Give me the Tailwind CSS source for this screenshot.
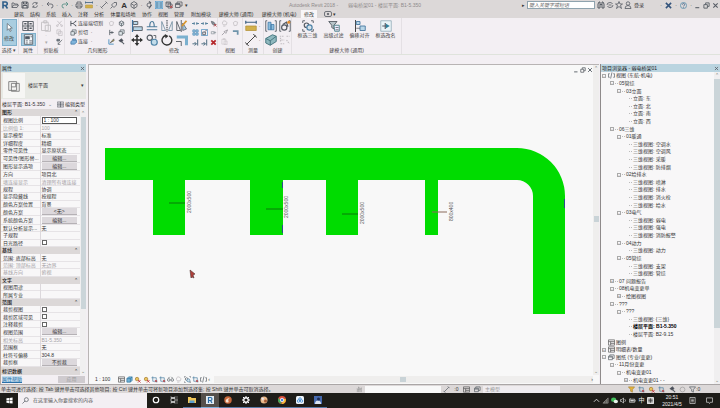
<!DOCTYPE html>
<html lang="zh-CN">
<head>
  <meta charset="UTF-8" />
  <meta name="viewport" content="width=device-width, initial-scale=1.0" />
  <title>Autodesk Revit 2018</title>
  <script src="https://cdn.jsdelivr.net/npm/@tailwindcss/browser@4"></script>
</head>
<body class="h-screen flex flex-col overflow-hidden bg-[#f3eff3] fill-none stroke-[#555b63] [stroke-width:1.6] text-[#333] font-['Liberation_Sans','Noto_Sans_CJK_SC',sans-serif] text-[5px] leading-[7px] whitespace-nowrap">

  <!-- icon set, all on a 16 grid; fill and stroke come from the body -->
  <svg class="hidden">
    <symbol id="revit" viewBox="0 0 16 16"><path d="M4 15V2h5a3.500 3.500 0 0 1 0 7H5M9 9l4 6" stroke="#2f5f8a" stroke-width="3.200"/></symbol>
    <symbol id="open" viewBox="0 0 16 16"><path d="M2 13V4h4l1 2h6v2M2 13l3-5h10l-3 5z"/></symbol>
    <symbol id="save" viewBox="0 0 16 16"><path d="M2 2h11l1 2v10H2zM5 2v4h6V2M4 14V9h8v5" stroke-width="2"/></symbol>
    <symbol id="sync" viewBox="0 0 16 16"><path d="M3 7a5 5 0 0 1 9-2M13 9a5 5 0 0 1-9 2M12 2v4H9M4 14v-4h3"/></symbol>
    <symbol id="undo" viewBox="0 0 16 16"><path d="M6 2L2 6l4 4M2 6h8q4 0 4 4t-4 4"/></symbol>
    <symbol id="redo" viewBox="0 0 16 16"><path d="M10 2l4 4-4 4M14 6H6q-4 0-4 4t4 4" stroke="#4d8a80"/></symbol>
    <symbol id="print" viewBox="0 0 16 16"><path d="M4 6V2h8v4M4 12H2V6h12v6h-2M4 10h8v4H4z"/></symbol>
    <symbol id="measure" viewBox="0 0 16 16"><path d="M1 3h14M1 1v4M15 1v4" stroke="#3c5f80"/><path d="M1 8h14v6H1z" fill="#d2b04c" stroke="#b3923a" stroke-width="1"/></symbol>
    <symbol id="line" viewBox="0 0 16 16"><path d="M3 13L13 3M1 11l4 4M11 1l4 4"/></symbol>
    <symbol id="tag" viewBox="0 0 16 16"><path d="M3 8l5-5h5v5l-5 5zM1 15l4-4"/></symbol>
    <symbol id="cube" viewBox="0 0 16 16"><path d="M8 1l6 4v6l-6 4-6-4V5zM2 5l6 4 6-4M8 9v6"/></symbol>
    <symbol id="section" viewBox="0 0 16 16"><circle cx="8" cy="8" r="4"/><path d="M8 1l4 3M8 15l5-7" stroke-width="2.400"/></symbol>
    <symbol id="thin" viewBox="0 0 16 16"><path d="M0 0h16v16H0z" fill="#a9d2ea" stroke="#4189bd"/><path d="M2 4h5M2 8h5M2 12h5M9 4h5M9 8h5M9 12h5" stroke="#27557c"/></symbol>
    <symbol id="closewin" viewBox="0 0 16 16"><path d="M2 2h9v9H2zM2 4h9M6 6h8v8H6z"/><path d="M10 9l5 5M15 9l-5 5" stroke="#c2383a"/></symbol>
    <symbol id="switch" viewBox="0 0 16 16"><path d="M1 5h9v8H1zM4 5V2h10v8h-4M1 7h9"/></symbol>
    <symbol id="binoc" viewBox="0 0 16 16"><path d="M2 14V6l2-4h2v12zM10 14V2h2l2 4v8zM6 7h4" stroke-width="2"/></symbol>
    <symbol id="comm" viewBox="0 0 16 16"><path d="M2 8q0-5 6-5 4 0 5 3M14 8q0 5-6 5-4 0-5-3M5 8h6"/></symbol>
    <symbol id="hand" viewBox="0 0 16 16"><path d="M3 14V6l3 3V2l3 7 3-5v10M6 9v5M9 9v5" stroke="#999"/></symbol>
    <symbol id="star" viewBox="0 0 16 16"><path d="M8 1l2 5h5l-4 3 2 6-5-4-5 4 2-6-4-3h5z"/></symbol>
    <symbol id="user" viewBox="0 0 16 16"><circle cx="8" cy="5" r="3.500"/><path d="M2 15q0-6 6-6t6 6z"/></symbol>
    <symbol id="exchange" viewBox="0 0 16 16"><path d="M2 2l12 12M14 2L2 14" stroke="#34547c" stroke-width="3.500"/></symbol>
    <symbol id="help" viewBox="0 0 16 16"><circle cx="8" cy="8" r="7" stroke="#4b87a8"/><path d="M5.500 6q0-2.500 2.500-2.500T10.500 6 8 9M8 11v2" stroke="#34547c"/></symbol>
    <symbol id="min" viewBox="0 0 16 16"><path d="M3 13h9" stroke-width="2.400"/></symbol>
    <symbol id="restore" viewBox="0 0 16 16"><path d="M2 6h8v8H2zM6 6V2h8v8h-4" stroke-width="2"/></symbol>
    <symbol id="x" viewBox="0 0 16 16"><path d="M3 3l10 10M13 3L3 13" stroke-width="2.400"/></symbol>
    <symbol id="arrow" viewBox="0 0 16 16"><path d="M4 1v12l3-3 2 5 2-1-2-5h4z" fill="#fff" stroke-width="1.200"/></symbol>
    <symbol id="typeprops" viewBox="0 0 16 16"><path d="M1 2h7v12H1zM8 2h7v12H8zM1 8h14" stroke-width="1.200"/><path d="M3 5h3M10 5h3M3 11h3M10 11h3" stroke-width="2"/></symbol>
    <symbol id="props" viewBox="0 0 16 16"><path d="M2 1h12v14H2z" fill="#f4f8fb" stroke-width="1.200"/><path d="M4 4h5v3H4z" fill="#456" /><path d="M11 4h2M4 10h3M9 10h4M4 13h3M9 13h4" stroke-width="1.200"/></symbol>
    <symbol id="paste" viewBox="0 0 16 16"><path d="M2 3h9v11H2zM5 1h4v3H5zM7 7h7v8H7z" stroke="#c3bfc3" stroke-width="1.200"/></symbol>
    <symbol id="cut" viewBox="0 0 16 16"><path d="M3 2l9 10M13 2L4 12" stroke="#bdb9bd"/><circle cx="3" cy="13" r="2" stroke="#bdb9bd"/><circle cx="13" cy="13" r="2" stroke="#bdb9bd"/></symbol>
    <symbol id="copyg" viewBox="0 0 16 16"><path d="M2 2h8v9H2zM6 6h8v9H6z" stroke="#c3bfc3"/></symbol>
    <symbol id="match" viewBox="0 0 16 16"><path d="M2 3h6v4H2z" fill="#7a8590"/><path d="M5 14l9-10M5 10v5h5"/></symbol>
    <symbol id="cope" viewBox="0 0 16 16"><path d="M2 2v12M2 8h5M7 8l7-6M7 8l7 6M13 2v3M13 14v-3" stroke-width="2.200"/></symbol>
    <symbol id="cutgeo" viewBox="0 0 16 16"><path d="M2 6h8v8H2zM5 6V2h9v8h-4" fill="#e2e8ec"/></symbol>
    <symbol id="join" viewBox="0 0 16 16"><path d="M2 8l4-3h9v5l-5 4H2zM6 5V2h7v3" fill="#7fb4da" stroke="#3d76a6"/></symbol>
    <symbol id="solid" viewBox="0 0 16 16"><path d="M3 5l5-3 5 3v6l-5 3-5-3zM8 8v6M3 5l5 3 5-3" fill="#d5dde2"/></symbol>
    <symbol id="solidg" viewBox="0 0 16 16"><path d="M3 6l4-3 6 2-2 7-6 1z" stroke="#bdb9bd"/></symbol>
    <symbol id="split" viewBox="0 0 16 16"><path d="M4 2v12M4 8h9M9 5v6" stroke-width="2"/></symbol>
    <symbol id="paint" viewBox="0 0 16 16"><path d="M2 3v11h11" stroke="#4189bd" stroke-width="2"/><path d="M5 11l8-9 1 4z" fill="#d2b04c"/></symbol>
    <symbol id="hammer" viewBox="0 0 16 16"><path d="M3 6l5-4 3 4-4 3zM8 8l6 6" fill="#445" stroke-width="2.400"/></symbol>
    <symbol id="align" viewBox="0 0 16 16"><path d="M2 0v16" stroke="#3d76a6"/><path d="M3 2h6v4H3zM3 9h12v5H3z" fill="#b8d6e8" stroke-width="1.200"/></symbol>
    <symbol id="offset" viewBox="0 0 16 16"><path d="M1 13h14M1 9h4q0-7 3-7t3 7h4M5 9h6" stroke="#4f7c9c"/></symbol>
    <symbol id="mirror" viewBox="0 0 16 16"><path d="M8 0v16" stroke-dasharray="2 1"/><path d="M1 14V2l5 12zM15 14V2l-5 12z" stroke="#7b95a8" stroke-width="1.200"/></symbol>
    <symbol id="mirrorp" viewBox="0 0 16 16"><path d="M7 0v16M1 14V2l5 12z" stroke-width="1.200"/><path d="M9 14V4l5 8z" fill="#a5c9e0" stroke-width="1"/><path d="M8 8l6-7" stroke="#d9962c" stroke-width="2.400"/></symbol>
    <symbol id="move" viewBox="0 0 16 16"><path d="M8 2v12M2 8h12" stroke="#333" stroke-width="2"/><path d="M8 0l3 4H5zM8 16l3-4H5zM0 8l4-3v6zM16 8l-4-3v6z" fill="#333" stroke="none"/></symbol>
    <symbol id="copy" viewBox="0 0 16 16"><circle cx="5" cy="5" r="3.500"/><circle cx="11" cy="11" r="4" fill="#c3dcea" stroke="#4f84a8"/><path d="M10 2h3v4" stroke-width="1.200"/></symbol>
    <symbol id="rotate" viewBox="0 0 16 16"><path d="M6 2a6.500 6.500 0 1 0 5 .5" stroke="#333" stroke-width="1.800"/><path d="M5 0l5 2.500L6 6z" fill="#333" stroke="none"/></symbol>
    <symbol id="trim" viewBox="0 0 16 16"><path d="M1 4h13v11" stroke="#7bb0cf" stroke-width="4"/><path d="M0 10h7v6" stroke-width="1.200"/></symbol>
    <symbol id="gap" viewBox="0 0 16 16"><path d="M0 8h6M10 8h6M5 5v6M11 5v6" stroke="#56809c" stroke-width="2.200"/></symbol>
    <symbol id="unpin" viewBox="0 0 16 16"><path d="M3 3l6 2 4 6-4 1-4-3z" fill="#8d979e"/><path d="M9 9l6 6M15 9l-6 6" stroke="#c2383a"/></symbol>
    <symbol id="array" viewBox="0 0 16 16"><path d="M2 2h5v5H2zM9 2h5v5H9zM2 9h5v5H2zM9 9h5v5H9z" fill="#b8d6e8" stroke="#3d84b4"/></symbol>
    <symbol id="scale" viewBox="0 0 16 16"><path d="M1 1h14v14H1z" stroke="#4189bd"/><path d="M4 7h6v6H4zM9 6l4-4" stroke-width="2"/></symbol>
    <symbol id="pin" viewBox="0 0 16 16"><path d="M3 6h6v5H3zM9 8h5M11 5v7" stroke="#8d979e"/></symbol>
    <symbol id="extend" viewBox="0 0 16 16"><path d="M13 1v14M1 11h9M6 7l4 4-4 4" stroke="#4a6a80" stroke-width="2.200"/></symbol>
    <symbol id="del" viewBox="0 0 16 16"><path d="M3 3l10 10M13 3L3 13" stroke="#b5262a" stroke-width="4"/></symbol>
    <symbol id="bulb" viewBox="0 0 16 16"><path d="M5 14h5M5 11q-3-3-1-7t7-1 1 8z" stroke="#bdb9bd"/></symbol>
    <symbol id="brush" viewBox="0 0 16 16"><path d="M2 14l6-6M7 6l4 4 4-8z" stroke="#8c8a90"/></symbol>
    <symbol id="beam" viewBox="0 0 16 16"><path d="M2 5h11v8" stroke="#6f94ab" stroke-width="4"/></symbol>
    <symbol id="dim" viewBox="0 0 16 16"><path d="M2 14L14 2M0 11l5 5M11 0l5 5" stroke="#333" stroke-width="1.200"/></symbol>
    <symbol id="group" viewBox="0 0 16 16"><path d="M3 1H1v14h2M13 1h2v14h-2" stroke-width="1.200"/><path d="M4 3h4v10H4zM8 6h4v7H8z" fill="#8bbddc" stroke="#3d76a6" stroke-width="1"/></symbol>
    <symbol id="similar" viewBox="0 0 16 16"><path d="M3 1H1v14h2M13 1h2v14h-2" stroke-width="1.200"/><circle cx="7" cy="10" r="3.500"/><path d="M5 6l5-3 2 6"/><circle cx="13" cy="3" r="2" fill="#e08a2c" stroke="none"/></symbol>
    <symbol id="assembly" viewBox="0 0 16 16"><path d="M1 6l9-5 5 2v7l-8 5-6-3z" fill="#8fb9bf" stroke="#41727a" stroke-width="1.200"/><path d="M1 6l6 3 8-6M7 9v6" stroke="#41727a" stroke-width="1.200"/></symbol>
    <symbol id="parts" viewBox="0 0 16 16"><path d="M1 3h5M10 3h4M3 8h4M10 8l4 5M2 13h5M2 5v5" stroke="#c3bfc3" stroke-dasharray="2 1"/></symbol>
    <symbol id="box3d" viewBox="0 0 16 16"><path d="M1 4V1h3M12 1h3v3M15 12v3h-3M4 15H1v-3" stroke-width="1.200"/><circle cx="6" cy="7" r="3" /><circle cx="10" cy="10" r="3.500" fill="#d4e2ea" stroke="#4f84a8"/></symbol>
    <symbol id="funnel" viewBox="0 0 16 16"><path d="M1 2h11L8 7v5L5 10V7z" fill="#b7c4c8" stroke-width="1.200"/><path d="M8 7h7v8H9z" fill="#eef" stroke="#4b8088" stroke-width="1.200"/><path d="M10 10h4M10 13h4" stroke-width="1"/></symbol>
    <symbol id="offalign" viewBox="0 0 16 16"><path d="M2 0v16" stroke="#333" stroke-width="1.200"/><path d="M3 2h5v4H3zM8 8h7v6H8z" fill="#b8d6e8" stroke="#4878a0" stroke-width="1.200"/><path d="M3 11h5" stroke-width="1"/></symbol>
    <symbol id="rename" viewBox="0 0 16 16"><path d="M1 1h14v14H1z" fill="#eaf4f8" stroke="#8ba5b2" stroke-width="1"/><path d="M7 4v8M3 8h5" stroke-width="1.500"/><path d="M8 5l5 3-5 3z" fill="#2f7f9c" stroke="none"/></symbol>
    <symbol id="ribtoggle" viewBox="0 0 16 16"><rect x="1" y="3" width="14" height="10" rx="3"/><circle cx="8" cy="8" r="1.500" fill="#555"/></symbol>
    <symbol id="views" viewBox="0 0 16 16"><path d="M4 4H1v8h3M12 4h3v8h-3M9 1L6 15"/></symbol>
    <symbol id="sheet" viewBox="0 0 16 16"><path d="M1 2h14v12H1zM1 6h14M6 6v8M6 10h9" stroke="#555"/></symbol>
    <symbol id="vbox" viewBox="0 0 16 16"><path d="M2 6h8v8H2zM2 6l4-4h8v8l-4 4M10 6l4-4" fill="#72b3d6" stroke="#3477a0"/></symbol>
    <symbol id="sun" viewBox="0 0 16 16"><circle cx="7" cy="7" r="4" fill="#eac45e" stroke="#a57b30"/><path d="M9 9l6 6M15 9l-6 6" stroke="#c2383a" stroke-width="2"/></symbol>
    <symbol id="crop" viewBox="0 0 16 16"><path d="M4 1v11h11M1 4h11v11" stroke="#4a7ea0"/><path d="M9 9l5 5M14 9l-5 5" stroke="#c2383a"/></symbol>
    <symbol id="glasses" viewBox="0 0 16 16"><circle cx="4" cy="9" r="3"/><circle cx="12" cy="9" r="3"/><path d="M3 5l3-3M13 5l-3-3"/></symbol>
    <symbol id="filter" viewBox="0 0 16 16"><path d="M1 2h14l-5 6v6l-4-2V8z"/></symbol>
    <symbol id="filtery" viewBox="0 0 16 16"><path d="M1 2h14l-5 6v6l-4-2V8z" fill="#e8b53a" stroke="#a8873c"/></symbol>
    <symbol id="gear" viewBox="0 0 16 16"><circle cx="8" cy="8" r="4.500" stroke="#fff" stroke-width="2.600"/><path d="M8 0v3M8 13v3M0 8h3M13 8h3M2 2l2 2M12 12l2 2M14 2l-2 2M4 12l-2 2" stroke="#fff" stroke-width="2"/></symbol>
    <symbol id="ring" viewBox="0 0 16 16"><circle cx="8" cy="8" r="5.500" stroke="#999" stroke-width="1.500"/></symbol>
    <symbol id="win" viewBox="0 0 16 16"><path d="M1 3l6-1v5.500H1zM8 2l7-1v6.500H8zM1 8.500h6V14l-6-1zM8 8.500h7V15l-7-1z" fill="#fff" stroke="none"/></symbol>
    <symbol id="search" viewBox="0 0 16 16"><circle cx="10" cy="6" r="4.500"/><path d="M7 9l-6 6"/></symbol>
    <symbol id="cortana" viewBox="0 0 16 16"><circle cx="8" cy="8" r="5.500" stroke="#fff" stroke-width="2.400"/></symbol>
    <symbol id="taskview" viewBox="0 0 16 16"><path d="M2 1v2h8V1M2 15v-2h8v2M2 5h8v6H2zM14 1v2M14 5v6M14 13v2" stroke="#ddd"/></symbol>
    <symbol id="folder" viewBox="0 0 16 16"><path d="M0 2h6l1 2h9v10H0z" fill="#f0c659" stroke="none"/><path d="M3 9h10v5H3z" fill="#5b9fd0" stroke="none"/></symbol>
    <symbol id="revitapp" viewBox="0 0 16 16"><path d="M0 0h16v16H0z" fill="#e4edf4" stroke="none"/><path d="M5 14V3h4a3 3 0 0 1 0 6H5M9 9l3 5" stroke="#2b6ca5" stroke-width="2.400"/></symbol>
    <symbol id="swirl" viewBox="0 0 16 16"><circle cx="8" cy="8" r="7.500" fill="#c8693c" stroke="none"/><path d="M3 10q2-7 9-5-5 1-3 5t-4 3z" fill="#f4e4d4" stroke="none"/></symbol>
    <symbol id="palette" viewBox="0 0 16 16"><circle cx="8" cy="8" r="7" fill="#e9b98a" stroke="none"/><path d="M2 3l6 1-2 6z" fill="#e7e7f2" stroke="none"/><circle cx="11" cy="10" r="3" fill="#a45b39" stroke="none"/></symbol>
    <symbol id="chrome" viewBox="0 0 16 16"><circle cx="8" cy="8" r="8" fill="#d94f3c" stroke="none"/><path d="M1 4l5 7 1 5A8 8 0 0 1 1 4z" fill="#3fa757" stroke="none"/><path d="M15.500 6A8 8 0 0 1 7 16l4-6V6z" fill="#f1c232" stroke="none"/><circle cx="8" cy="8" r="3.500" fill="#4a86e0" stroke="#fff"/></symbol>
    <symbol id="cloud" viewBox="0 0 16 16"><rect width="16" height="16" rx="3" fill="#eef4fa" stroke="none"/><circle cx="8" cy="6" r="2.500" stroke="#3a86d0"/><circle cx="5" cy="10" r="2.500" stroke="#3a86d0"/><circle cx="11" cy="10" r="2.500" stroke="#3a86d0"/></symbol>
    <symbol id="photo" viewBox="0 0 16 16"><path d="M0 0h16v16H0z" fill="#4669ad" stroke="none"/><path d="M2 16q0-7 6-7t6 7z" fill="#dbe5f2" stroke="none"/><circle cx="9" cy="6" r="3" fill="#1e2c50" stroke="none"/></symbol>
    <symbol id="up" viewBox="0 0 16 16"><path d="M2 11l6-6 6 6" stroke="#ddd" stroke-width="2"/></symbol>
    <symbol id="wifi" viewBox="0 0 16 16"><path d="M2 14L14 2v12zM6 14v-4M10 14V6" stroke="#8b8b88" fill="#55554f"/></symbol>
    <symbol id="wechat" viewBox="0 0 16 16"><ellipse cx="6" cy="6" rx="6" ry="5" fill="#43c05c" stroke="none"/><ellipse cx="11" cy="10" rx="5" ry="4" fill="#e8f3ea" stroke="none"/></symbol>
    <symbol id="sound" viewBox="0 0 16 16"><path d="M1 6h3l4-4v12l-4-4H1zM11 5q3 3 0 6" stroke="#ddd"/></symbol>
    <symbol id="battery" viewBox="0 0 16 16"><path d="M1 5h12v7H1zM14 7v3M3 3v2" stroke="#ddd"/><path d="M3 7h8v3H3z" fill="#ddd" stroke="none"/></symbol>
    <symbol id="sogou" viewBox="0 0 16 16"><rect width="16" height="16" rx="2" fill="#ddd" stroke="none"/><path d="M3 5h10M3 8h10M3 11h10M8 3v10" stroke="#333"/></symbol>
    <symbol id="news" viewBox="0 0 16 16"><path d="M2 1h12v14H2zM5 5h6M5 8h6M5 11h6" stroke="#ddd"/></symbol>
    <symbol id="note" viewBox="0 0 16 16"><path d="M1 2h14v10h-5l-2 3-2-3H1z" stroke="#ddd"/></symbol>
  </svg>

  <header class="bg-[#dcd8d8]">
    <!-- quick access, title, search -->
    <div class="flex h-[10px] items-center">
      <div class="flex w-[188px] items-center justify-between pl-[1px]" data-icons="revit open save sync . undo . redo . print measure . line tag A cube . section thin closewin switch ▾" data-size="size-[8px]"></div>
      <h1 class="flex-1 text-center text-[#8f8b8b]">Autodesk Revit 2018 - &nbsp; &nbsp; &nbsp; 弱电桥架01 - 楼层平面: B1-5.350</h1>
      <div class="flex items-center gap-[2px] pr-[1px]">
        <span>▸</span>
        <input type="text" aria-label="搜索" placeholder="键入关键字或短语" class="h-[8px] w-[68px] border border-[#8fa3ae] bg-white px-[1px] italic placeholder:text-[#666]" />
        <div class="flex gap-[1px]" data-icons="binoc comm star user" data-size="size-[8px]"></div>
        <a href="#" class="w-[24px]">登录</a>
        <div class="flex w-[32px] items-center gap-[3px]" data-icons=". exchange . help ." data-size="size-[7px]"></div>
        <div class="flex gap-[2px]" data-icons="min restore x" data-size="size-[7px]"></div>
      </div>
    </div>
    <nav class="flex h-[8px] items-center pl-[11px] text-center leading-[8px]">
      <a href="#" class="w-[16px]">建筑</a>
      <a href="#" class="w-[16px]">结构</a>
      <a href="#" class="w-[16px]">系统</a>
      <a href="#" class="w-[16px]">插入</a>
      <a href="#" class="w-[16px]">注释</a>
      <a href="#" class="w-[16px]">分析</a>
      <a href="#" class="w-[32px]">体量和场地</a>
      <a href="#" class="w-[16px]">协作</a>
      <a href="#" class="w-[16px]">视图</a>
      <a href="#" class="w-[16px]">管理</a>
      <a href="#" class="w-[28px]">附加模块</a>
      <a href="#" class="w-[42px]">建模大师 (通用)</a>
      <a href="#" class="w-[44px]">建模大师 (机电)</a>
      <a href="#" class="w-[16px] bg-[#f8f6f8]">修改</a>
      <div class="ml-[7px] flex items-center gap-[1px]" data-icons="ribtoggle ▾" data-size="size-[8px]"></div>
    </nav>
  </header>

  <!-- ribbon -->
  <section class="flex h-[37px] border-b border-[#dfe3dc] text-[#444]">
    <div class="flex w-[19px] flex-col items-center border-r border-[#e4e0e4]">
      <button class="mt-[1px] flex h-[27px] w-[15px] flex-col items-center justify-center gap-[3px] border border-[#7fb0cc] bg-[#a9cde0]">
        <svg class="size-[9px]"><use href="#arrow"/></svg>修改
      </button>
      <p class="mt-auto">选择 ▾</p>
    </div>
    <div class="flex w-[18px] flex-col items-center">
      <button class="mt-[1px] flex h-[14px] items-center" aria-label="类型属性"><svg class="size-[12px]"><use href="#typeprops"/></svg></button>
      <button class="flex h-[13px] w-[15px] items-center justify-center border border-[#7fb0cc] bg-[#a9cde0]" aria-label="属性"><svg class="size-[11px]"><use href="#props"/></svg></button>
      <p class="mt-auto">属性</p>
    </div>
    <div class="flex w-[28px] flex-col items-center border-x border-[#e4e0e4]">
      <div class="flex gap-[3px] pt-[2px]">
        <div class="flex w-[13px] flex-col items-center text-[#aaa]" data-icons="paste .  ▾" data-size="size-[12px]"></div>
        <div class="flex flex-col gap-[2px]" data-icons="cut copyg match" data-size="size-[7px]"></div>
      </div>
      <p class="mt-auto">剪贴板</p>
    </div>
    <div class="flex w-[66px] flex-col items-center border-r border-[#e4e0e4]">
      <div class="flex gap-[3px] pt-[2px]">
        <div class="flex w-[35px] flex-col gap-[2px]">
          <button class="flex items-center gap-[1px]"><svg class="size-[7px]"><use href="#cope"/></svg>连接端切割</button>
          <button class="flex items-center gap-[1px]"><svg class="size-[7px]"><use href="#cutgeo"/></svg>剪切 &nbsp;·</button>
          <button class="flex items-center gap-[1px]"><svg class="size-[7px]"><use href="#join"/></svg>连接 &nbsp;·</button>
        </div>
        <div class="flex flex-col gap-[2px]" data-icons="solidg split paint" data-size="size-[7px]"></div>
        <div class="flex flex-col gap-[2px]" data-icons="solid cutgeo hammer" data-size="size-[7px]"></div>
      </div>
      <p class="mt-auto">几何图形</p>
    </div>
    <div class="flex w-[87px] flex-col items-center border-r border-[#e4e0e4]">
      <div class="flex gap-[4px] pt-[2px]">
        <div class="grid grid-cols-4 gap-x-[3px] gap-y-[2px]" data-icons="align offset mirror mirrorp move copy rotate trim" data-size="size-[12px]"></div>
        <div class="grid grid-cols-3 gap-[2px]" data-icons="gap gap unpin array scale pin extend extend del" data-size="size-[7px]"></div>
      </div>
      <p class="mt-auto">修改</p>
    </div>
    <div class="flex w-[25px] flex-col items-center border-r border-[#e4e0e4]">
      <div class="grid grid-cols-2 gap-x-[4px] gap-y-[2px] pt-[2px]" data-icons="bulb solidg brush beam paste" data-size="size-[7px]"></div>
      <p class="mt-auto">视图</p>
    </div>
    <div class="flex w-[21px] flex-col items-center border-r border-[#e4e0e4]">
      <div class="grid grid-cols-[11px_3px] items-center gap-x-[2px] gap-y-[2px] pt-[2px]" data-icons="measure . dim ." data-size="size-[12px]"></div>
      <p class="mt-auto">测量</p>
    </div>
    <div class="flex w-[28px] flex-col items-center border-r border-[#e4e0e4]">
      <div class="grid grid-cols-2 gap-[2px] pt-[2px]" data-icons="group similar assembly parts" data-size="size-[12px]"></div>
      <p class="mt-auto">创建</p>
    </div>
    <div class="flex w-[110px] flex-col items-center border-r border-[#e4e0e4]">
      <div class="flex gap-[6px] pt-[2px]">
        <button class="flex w-[20px] flex-col items-center"><svg class="size-[12px]"><use href="#box3d"/></svg>框选三维</button>
        <button class="flex w-[20px] flex-col items-center"><svg class="size-[12px]"><use href="#funnel"/></svg>高级过滤</button>
        <button class="flex w-[20px] flex-col items-center"><svg class="size-[12px]"><use href="#offalign"/></svg>偏移对齐</button>
        <button class="flex w-[20px] flex-col items-center"><svg class="size-[12px]"><use href="#rename"/></svg>框选改名</button>
      </div>
      <p class="mt-auto">建模大师 (通用)</p>
    </div>
  </section>

  <main class="flex min-h-0 flex-1 pt-[9px]">
    <!-- properties palette -->
    <aside class="flex w-[86px] flex-col border-l border-[#b9a79c]">
      <h2 class="flex h-[8px] items-center justify-between bg-[#bad4e0] px-[1px] text-[#222]">属性 <button aria-label="关闭"><svg class="size-[5px]"><use href="#x"/></svg></button></h2>
      <div class="flex h-[27px] items-center gap-[3px] bg-[#e7e9e4] px-[2px]">
        <div class="flex h-[25px] w-[22px] items-center justify-center bg-[#f6f6f4]">
          <svg class="size-[14px]" viewBox="0 0 16 16" fill="none" stroke="#777" stroke-width="1"><path d="M2 3h9v10H2zM5 5h9v9H5zM5 9h5V5"/></svg>
        </div>
        <span class="flex-1">楼层平面</span>
        <span>▾</span>
      </div>
      <div class="flex h-[10px] items-center justify-between px-[1px]">
        <label for="inst">楼层平面: B1-5.350</label>
        <select id="inst" class="w-[6px] appearance-none text-[#777]"><option>⌄</option></select>
        <button class="flex items-center gap-[1px]"><svg class="size-[7px]"><use href="#typeprops"/></svg>编辑类型</button>
      </div>
      <div class="flex min-h-0 flex-1">
        <table class="h-full flex-1 table-fixed border-collapse bg-[#f8f7f8]">
          <tbody id="props-body"></tbody>
        </table>
        <div class="flex w-[6px] flex-col items-center bg-[#f0eff0] pt-[1px] text-[#777]">
          <span>⌃</span>
          <div class="h-[192px] w-[5px] bg-[#cbd5d9]"></div>
          <span class="mt-auto">⌄</span>
        </div>
      </div>
      <div class="flex h-[9px] items-center justify-between px-[1px]">
        <a href="#" class="bg-[#c4dff0] text-[#2a70a8] underline">属性帮助</a>
        <button class="h-[7px] w-[27px] bg-[#cfcbcf] text-[#999]">应用</button>
      </div>
    </aside>

    <!-- drawing view -->
    <section class="ml-[2px] flex flex-1 flex-col border-l border-t border-[#b8b4b4] bg-[#f8f8f8]">
      <div class="flex min-h-0 flex-1">
        <div class="relative min-w-0 flex-1">
          <div class="absolute top-[2px] right-0 z-10 flex gap-[1px]" data-icons="min restore x" data-size="size-[6px]"></div>
          <svg class="h-full w-full" font-family="Liberation Sans Narrow, Liberation Sans, sans-serif" font-size="5" fill="#555" stroke="none" stroke-width="1">
            <g fill="#00dc00">
              <path d="M16 83H428A48 48 0 0 1 476 131V249H444V131A16 16 0 0 0 428 115H16Z"/>
              <path d="M64 115h32v55H64zM161 115h33v55h-33zM237 115h32v55h-32zM336 115h13v55h-13z"/>
            </g>
            <path d="M80 138h16M177 144h17M253 149h16" stroke="#087a08"/>
            <path d="M343 147h15" stroke="#8a6a5a"/>
            <path d="M193.500 117v6M193.500 160v8M475.500 134v9" stroke="#2b4f8a"/>
            <text transform="translate(102 148) rotate(-90)">2000x500</text>
            <text transform="translate(199 153) rotate(-90)">2000x500</text>
            <text transform="translate(275 159) rotate(-90)">2000x500</text>
            <text transform="translate(364 156) rotate(-90)">800x400</text>
            <path d="M101 205l5 4-2 1 1 3-2-1-1 1z" fill="#b0403a" stroke="#503030" stroke-width=".6"/>
          </svg>
        </div>
        <div class="flex w-[6px] flex-col items-center bg-[#efeeed] text-[#777]">
          <span>⌃</span>
          <div class="mt-[144px] h-[6px] w-[5px] bg-[#c9d3d7]"></div>
          <span class="mt-auto">⌄</span>
        </div>
      </div>
      <div class="flex h-[9px] items-center">
        <span class="w-[29px] pl-[6px]">1 : 100</span>
        <div class="flex w-[92px] items-center justify-between" data-icons="sheet vbox sun sun crop crop glasses bulb box3d crop views ‹" data-size="size-[7px]"></div>
        <div class="ml-[4px] flex h-[7px] flex-1 items-center justify-between bg-[#efeeed]">
          <span></span><div class="h-[5px] w-[6px] bg-[#c9d3d7]"></div><span>›</span>
        </div>
        <div class="w-[6px]"></div>
      </div>
    </section>

    <!-- project browser -->
    <aside class="ml-[1px] flex w-[120px] flex-col border-l border-[#8f8b8b] bg-[#f8f7f8]">
      <h2 class="flex h-[8px] items-center justify-between bg-[#bad4e0] px-[1px] text-[#222]">项目浏览器 - 弱电桥架01 <button aria-label="关闭"><svg class="size-[5px]"><use href="#x"/></svg></button></h2>
      <div class="flex min-h-0 flex-1">
        <ul id="tree" class="flex flex-1 flex-col"></ul>
        <div class="flex w-[6px] flex-col items-center bg-[#f0eff0] text-[#777]">
          <span>⌃</span>
          <div class="h-[249px] w-[6px] bg-[#cbd5d9]"></div>
          <span class="mt-auto">⌄</span>
        </div>
      </div>
    </aside>
  </main>

  <!-- status bar -->
  <div class="flex h-[9px] items-center border-t border-[#aaa6a6] bg-[#dcd8d8]">
    <p class="w-[353px] pl-[1px]">单击可进行选择; 按 Tab 键并单击可选择其他项目; 按 Ctrl 键并单击可将新项目添加到选择集; 按 Shift 键并单击可取消选择。</p>
    <div class="flex w-[12px] justify-center" data-icons="hand" data-size="size-[7px]"></div>
    <select aria-label="工作集" class="h-[7px] w-[76px] appearance-none bg-[#f8f8f8]"><option></option></select>
    <div class="flex w-[42px] items-center justify-around" data-icons="line :0 sheet switch" data-size="size-[7px]"></div>
    <select aria-label="设计选项" class="h-[7px] w-[77px] appearance-none bg-[#efecef] pl-[2px] text-[#999]"><option>主模型</option></select>
    <div class="ml-auto flex w-[68px] items-center justify-between" data-icons="filtery crop sun crop hammer ring filter" data-size="size-[7px]"></div>
    <span class="w-[24px]">:0</span>
  </div>

  <!-- taskbar -->
  <footer class="flex h-[15px] items-center bg-[#1e1d19] text-[#eee]">
    <button class="flex w-[18px] justify-center" aria-label="开始"><svg class="size-[7px]"><use href="#win"/></svg></button>
    <div class="flex h-full w-[129px] items-center gap-[4px] bg-[#f3eff3] pl-[4px]">
      <svg class="size-[7px]"><use href="#search"/></svg>
      <input type="text" aria-label="搜索" placeholder="在这里输入你要搜索的内容" class="w-[110px] placeholder:text-[#555]" />
    </div>
    <div id="apps" class="flex h-full"></div>
    <div class="ml-auto flex items-center gap-[2px]" data-icons="up wifi wechat sound battery" data-size="size-[7px]"></div>
    <span class="w-[11px] text-center text-[6px]">中</span>
    <svg class="mr-[6px] size-[7px]"><use href="#sogou"/></svg>
    <p class="w-[24px] text-center">20:51<br>2021/4/5</p>
    <div class="flex w-[36px] justify-around pr-[2px]" data-icons="news note" data-size="size-[7px]"></div>
  </footer>

  <script>
    // icon strips: a name draws the symbol, anything else is shown as text
    document.querySelectorAll("[data-icons]").forEach(function (strip) {
      const size = strip.dataset.size;
      strip.innerHTML = strip.dataset.icons.split(/\s+/).map(function (name) {
        if (name === ".") return `<span class="w-[3px] text-center">·</span>`;
        if (name === "A") return `<button class="w-[8px] text-[8px] font-bold">A</button>`;
        if (!document.getElementById(name)) return `<span>${name}</span>`;
        return `<button aria-label="${name}"><svg class="${size}"><use href="#${name}"/></svg></button>`;
      }).join("");
    });

    // [label, value, kind]
    const props = [
      ["图形"],
      ["视图比例", "1 : 100", "box"], ["比例值 1:", "100", "off"], ["显示模型", "标准"], ["详细程度", "精细"],
      ["零件可见性", "显示原状态"], ["可见性/图形替...", "编辑...", "btn"], ["图形显示选项", "编辑...", "btn"],
      ["方向", "项目北"], ["墙连接显示", "清理所有墙连接", "off"], ["规程", "协调"], ["显示隐藏线", "按规程"],
      ["颜色方案位置", "背景"], ["颜色方案", "<无>", "btn"], ["系统颜色方案", "编辑...", "btn"],
      ["默认分析显示...", "无"], ["子规程", ""], ["日光路径", "", "check"],
      ["基线"],
      ["范围: 底部标高", "无"], ["范围: 顶部标高", "无边界", "off"], ["基线方向", "俯视", "off"],
      ["文字"],
      ["视图用途", ""], ["所属专业", ""],
      ["范围"],
      ["裁剪视图", "", "check"], ["裁剪区域可见", "", "check"], ["注释裁剪", "", "check"],
      ["视图范围", "编辑...", "btn"], ["相关标高", "B1-5.350", "off"], ["范围框", "无"],
      ["柱符号偏移", "304.8"], ["裁剪框", "不剪裁", "btn"],
      ["标识数据"]
    ];

    document.getElementById("props-body").innerHTML = props.map(function ([label, value, kind], i) {
      if (value === undefined) {
        return `<tr class="bg-[#dcd8d8] text-[#222]"><th colspan="2" class="p-0 pl-[1px] text-left font-medium"><div class="flex justify-between pr-[2px] leading-[7px]">${label}<span>⌃</span></div></th></tr>`;
      }
      let cell = value;
      if (kind === "btn") cell = `<button class="block h-[7px] w-full border-b border-[#b5b1b5] bg-[#dcd8dc] text-center leading-[6px]">${value.replace("<", "&lt;")}</button>`;
      if (kind === "box") cell = `<input id="p${i}" type="text" value="${value}" class="block h-[7px] w-full border border-[#555] bg-white px-[1px] leading-[5px]" />`;
      if (kind === "check") cell = `<input id="p${i}" type="checkbox" class="block size-[5px] appearance-none border border-[#666] bg-white" />`;
      return `<tr class="border-b border-[#e6e3e6] ${kind === "off" ? "text-[#a5a1a5]" : ""}">
        <td class="w-[39px] border-r border-[#dcd8dc] p-0 pl-[2px] leading-[6px]"><label for="p${i}">${label}</label></td>
        <td class="p-0 pr-[3px] pl-[1px] leading-[6px]">${cell}</td></tr>`;
    }).join("");

    // [depth, label, mark]
    const tree = [
      [0, "视图 (东航-机电)", "-", "views"],
      [1, "05管综", "-"], [2, "03立面", "-"], [3, "立面: 东"], [3, "立面: 北"], [3, "立面: 南"], [3, "立面: 西"],
      [1, "06三维", "-"],
      [2, "01暖通", "-"], [3, "三维视图: 空调水"], [3, "三维视图: 空调风"], [3, "三维视图: 采暖"], [3, "三维视图: 防排烟"],
      [2, "02给排水", "-"], [3, "三维视图: 喷淋"], [3, "三维视图: 排水"], [3, "三维视图: 消火栓"], [3, "三维视图: 给水"],
      [2, "03电气", "-"], [3, "三维视图: 弱电"], [3, "三维视图: 强电"], [3, "三维视图: 消防报警"],
      [2, "04动力", "-"], [3, "三维视图: 动力"],
      [2, "05管综", "-"], [3, "三维视图: 支架"], [3, "三维视图: 管综"],
      [1, "07 问题报告", "+"], [1, "08机电变更单", "-"], [2, "绘图视图", "+"],
      [1, "???", "-"], [2, "???", "-"], [3, "三维视图: {三维}"], [3, "楼层平面: B1-5.350", "", "bold"], [3, "楼层平面: B2-9.15"],
      [0, "图例", "", "sheet"], [0, "明细表/数量", "+", "sheet"], [0, "图纸 (专业/变更)", "-", "switch"],
      [1, "11月份变更", "-"], [2, "机电变更01", "-"], [3, "机电变更01 - -", "+"]
    ];
    const indent = ["pl-[1px]", "pl-[9px]", "pl-[16px]", "pl-[23px]"];

    document.getElementById("tree").innerHTML = tree.map(function ([depth, label, mark, extra]) {
      const box = mark
        ? `<span class="mr-[1px] flex size-[4px] items-center justify-center border border-[#aaa] text-[4px] leading-[2px] text-[#666]">${mark}</span>`
        : `<span class="mr-[1px] w-[4px]"></span>`;
      const lead = depth ? `<span class="mr-[1px] w-[3px] border-t border-dotted border-[#bbb]"></span>` : "";
      const icon = extra && extra !== "bold" ? `<svg class="mx-[1px] size-[7px]"><use href="#${extra}"/></svg>` : "";
      return `<li class="flex min-h-0 flex-1 items-center ${indent[depth]} ${extra === "bold" ? "font-bold text-black" : ""}">${box}${lead}${icon}<span>${label}</span></li>`;
    }).join("");

    const apps = ["cortana", "taskview", "folder", "revitapp", "swirl", "gear", "palette", "chrome", "cloud", "photo"];
    document.getElementById("apps").innerHTML = apps.map(function (app, i) {
      const state = i < 2 ? "border-transparent" : app === "revitapp" ? "border-[#7fb0dc] bg-[#55504c]" : "border-[#587aa5]";
      return `<button class="flex w-[18px] items-center justify-center border-b ${state}" aria-label="${app}"><svg class="size-[8px]"><use href="#${app}"/></svg></button>`;
    }).join("");
  </script>
</body>
</html>
